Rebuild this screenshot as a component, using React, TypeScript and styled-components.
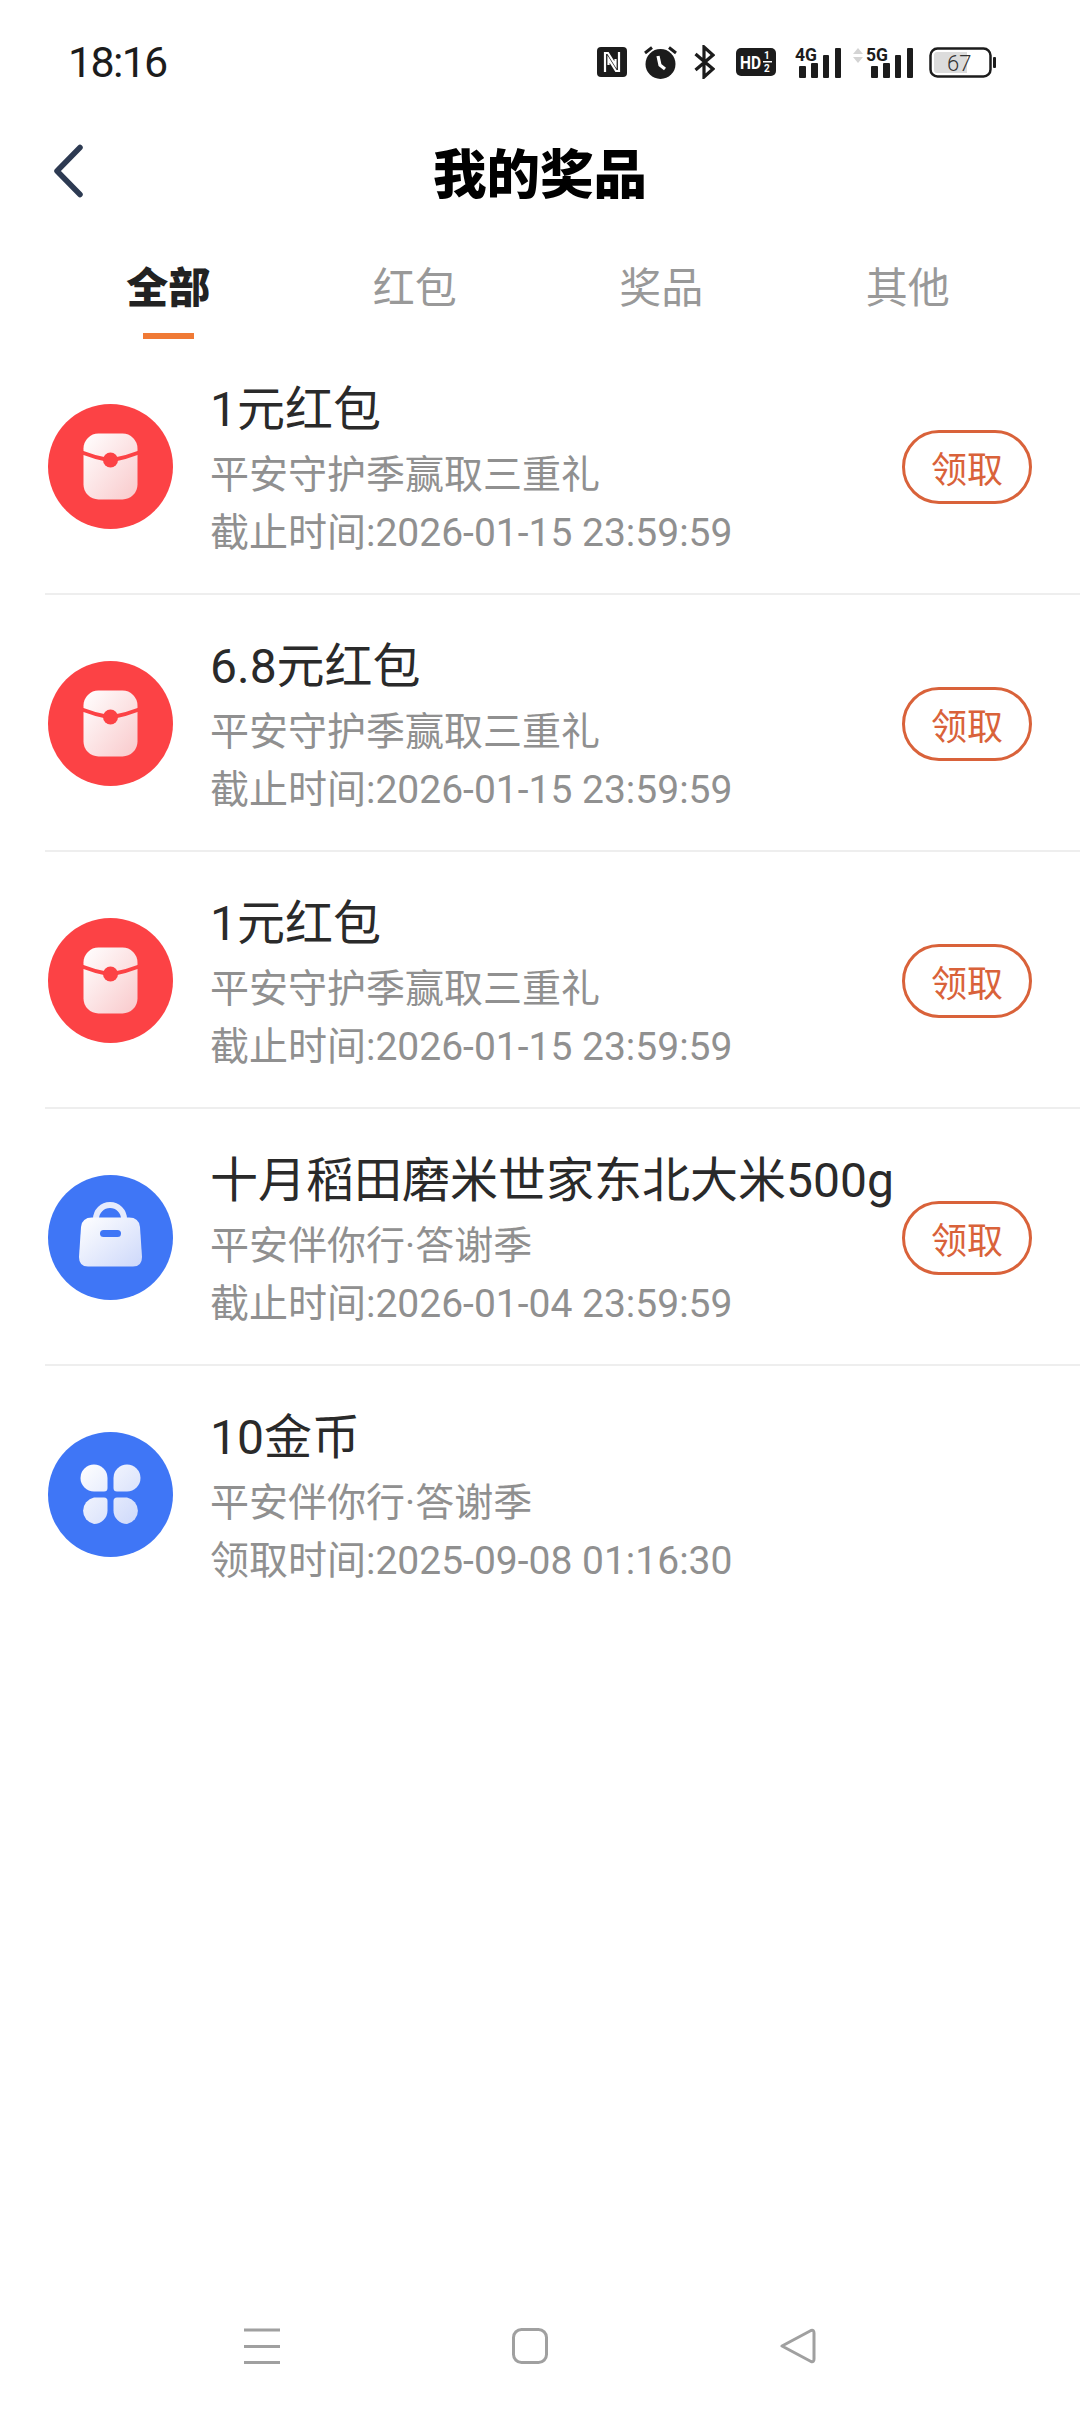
import styled, { createGlobalStyle } from "styled-components";

const GlobalStyle = createGlobalStyle`
  html, body {
    margin: 0;
    padding: 0;
    background: #fff;
    font-family: Roboto, "Noto Sans CJK SC", sans-serif;
  }
`;

const prizes = [
  { id: 1, name: "1元红包", from: "平安守护季赢取三重礼", time: "截止时间:2026-01-15 23:59:59", icon: "red", claim: true },
  { id: 2, name: "6.8元红包", from: "平安守护季赢取三重礼", time: "截止时间:2026-01-15 23:59:59", icon: "red", claim: true },
  { id: 3, name: "1元红包", from: "平安守护季赢取三重礼", time: "截止时间:2026-01-15 23:59:59", icon: "red", claim: true },
  { id: 4, name: "十月稻田磨米世家东北大米500g", from: "平安伴你行·答谢季", time: "截止时间:2026-01-04 23:59:59", icon: "bag", claim: true },
  { id: 5, name: "10金币", from: "平安伴你行·答谢季", time: "领取时间:2025-09-08 01:16:30", icon: "coin", claim: false },
];

const tabs = ["全部", "红包", "奖品", "其他"];

const RedPacketIcon = () => (
  <PrizeIcon viewBox="0 0 125 125">
    <defs>
      <linearGradient id="redFill" x1="0" y1="0" x2="1" y2="1">
        <stop offset="0" stopColor="#ffffff" />
        <stop offset="1" stopColor="#f9c9cb" />
      </linearGradient>
    </defs>
    <circle cx="62.5" cy="62.5" r="62.5" fill="#fc4245" />
    <rect x="35.5" y="29.5" width="54" height="66" rx="15" fill="url(#redFill)" />
    <path d="M34 48.500 Q48 54 62.500 56.500 Q77 54 91 48.500" fill="none" stroke="#fc4245" strokeWidth="4" />
    <circle cx="62.5" cy="56" r="7.500" fill="#fc4245" />
  </PrizeIcon>
);

const BagIcon = () => (
  <PrizeIcon viewBox="0 0 125 125">
    <defs>
      <linearGradient id="bagFill" x1="0" y1="0" x2="1" y2="1">
        <stop offset="0" stopColor="#ffffff" />
        <stop offset="1" stopColor="#cdd8fa" />
      </linearGradient>
    </defs>
    <circle cx="62.5" cy="62.5" r="62.5" fill="#3f76f6" />
    <path d="M48 47 V44 A14 14 0 0 1 76 44 V47" fill="none" stroke="#e6ebfc" strokeWidth="6" />
    <path d="M44 42.500 H81 Q91 42.500 92 52 L94 82 Q94 91.500 85 91.500 H40 Q31 91.500 31 82 L33 52 Q34 42.500 44 42.500 Z" fill="url(#bagFill)" />
    <rect x="52" y="55" width="21" height="7" rx="3.5" fill="#3f76f6" />
  </PrizeIcon>
);

const CoinIcon = () => (
  <PrizeIcon viewBox="0 0 125 125">
    <defs>
      <linearGradient id="coinFill" gradientUnits="userSpaceOnUse" x1="32" y1="32" x2="92" y2="92">
        <stop offset="0" stopColor="#ffffff" />
        <stop offset="1" stopColor="#cdd8fa" />
      </linearGradient>
    </defs>
    <circle cx="62.5" cy="62.5" r="62.5" fill="#3f76f6" />
    <path d="M46 32.500 A13.500 13.500 0 0 1 59.500 46 V56 Q59.500 59.500 56 59.500 H46 A13.500 13.500 0 0 1 46 32.500 Z" fill="url(#coinFill)" />
    <path d="M79 32.500 A13.500 13.500 0 0 1 79 59.500 H69 Q65.500 59.500 65.500 56 V46 A13.500 13.500 0 0 1 79 32.500 Z" fill="url(#coinFill)" />
    <path d="M46 92 A13.500 13.500 0 0 1 46 65.500 H56 Q59.500 65.500 59.500 69 V78.500 A13.500 13.500 0 0 1 46 92 Z" fill="url(#coinFill)" />
    <path d="M79 92 A13.500 13.500 0 0 1 65.500 78.500 V69 Q65.500 65.500 69 65.500 H79 A13.500 13.500 0 0 1 79 92 Z" fill="url(#coinFill)" />
  </PrizeIcon>
);

const icons: Record<string, () => React.ReactElement> = {
  red: RedPacketIcon,
  bag: BagIcon,
  coin: CoinIcon,
};

const StatusIcons = () => (
  <StIcons>
    {/* NFC */}
    <StatusSvg width="30" height="30" viewBox="0 0 30 30">
      <rect width="30" height="30" rx="4" fill="#1c1c1c" />
      <path d="M8 25 V6 H11 L18.500 18 V12 M22 5 V24 H19 L11.500 12 V18" fill="none" stroke="#fff" strokeWidth="2.200" />
    </StatusSvg>
    {/* alarm */}
    <StatusSvg $left={16} width="35" height="34" viewBox="0 0 35 34">
      <circle cx="17.500" cy="19" r="15" fill="#1c1c1c" />
      <path d="M2 8 L9 2.500 M33 8 L26 2.500" stroke="#1c1c1c" strokeWidth="3" />
      <path d="M15 11 L17 20 L22 24" fill="none" stroke="#fff" strokeWidth="3.200" />
    </StatusSvg>
    {/* bluetooth */}
    <StatusSvg $left={16} width="21" height="34" viewBox="0 0 21 34">
      <path d="M1.500 9 L19 24 L10 32 V2 L19 10 L1.500 25" fill="none" stroke="#1c1c1c" strokeWidth="3.200" />
    </StatusSvg>
    {/* HD */}
    <StatusSvg $left={21} width="40" height="28" viewBox="0 0 40 28">
      <rect width="40" height="28" rx="5" fill="#1c1c1c" />
      <StatusText x="4" y="21" fontSize="19" fill="#fff" textLength="21" lengthAdjust="spacingAndGlyphs">HD</StatusText>
      <StatusText x="28" y="11" fontSize="10" fill="#fff">1</StatusText>
      <rect x="27" y="13" width="9" height="1.500" fill="#fff" />
      <StatusText x="28" y="24" fontSize="10" fill="#fff">2</StatusText>
    </StatusSvg>
    {/* 4G */}
    <StatusSvg $left={19} $lift={6} width="46" height="37" viewBox="0 -6 46 37">
      <StatusText x="0" y="14" fontSize="19" fill="#1c1c1c" textLength="22" lengthAdjust="spacingAndGlyphs">4G</StatusText>
      <rect x="4" y="19" width="7" height="12" rx="1" fill="#1c1c1c" />
      <rect x="16" y="16" width="7" height="15" rx="1" fill="#1c1c1c" />
      <rect x="28" y="8" width="6" height="23" rx="1" fill="#1c1c1c" />
      <rect x="40" y="1" width="6" height="30" rx="1" fill="#1c1c1c" />
    </StatusSvg>
    {/* 5G */}
    <StatusSvg $left={12} $lift={6} width="60" height="37" viewBox="0 -6 60 37">
      <path d="M0 7 L5 1 L10 7 Z M0 10 L5 16 L10 10 Z" fill="#d4d4d4" />
      <StatusText x="13" y="14" fontSize="19" fill="#1c1c1c" textLength="22" lengthAdjust="spacingAndGlyphs">5G</StatusText>
      <rect x="18" y="19" width="7" height="12" rx="1" fill="#1c1c1c" />
      <rect x="30" y="16" width="7" height="15" rx="1" fill="#1c1c1c" />
      <rect x="42" y="8" width="6" height="23" rx="1" fill="#1c1c1c" />
      <rect x="54" y="1" width="6" height="30" rx="1" fill="#1c1c1c" />
    </StatusSvg>
    {/* battery */}
    <StatusSvg $left={16} width="67" height="31" viewBox="0 0 67 31">
      <rect x="1.500" y="1.500" width="60" height="28" rx="7" fill="none" stroke="#1c1c1c" strokeWidth="2.500" />
      <path d="M8 5 H38 V26 H8 Q5 26 5 23 V8 Q5 5 8 5 Z" fill="#dcdcdc" />
      <BatteryText x="18" y="24" fontSize="22" fill="#333">67</BatteryText>
      <rect x="64" y="10" width="3" height="11" rx="1" fill="#1c1c1c" />
    </StatusSvg>
  </StIcons>
);

const App = () => {
  return (
    <StPage>
      <GlobalStyle />
      <StStatusBar>
        <StTime>18:16</StTime>
        <StatusIcons />
      </StStatusBar>
      <StHeader>
        <StBack width="40" height="60" viewBox="0 0 40 60">
          <path d="M34 6.500 L11 30 L34 53.500" fill="none" stroke="#2d3a52" strokeWidth="5.500" strokeLinecap="round" strokeLinejoin="round" />
        </StBack>
        <StTitle>我的奖品</StTitle>
      </StHeader>
      <StTabs>
        {tabs.map((tab, i) => (
          <StTab key={tab} $active={i === 0}>
            {tab}
            <StTabLine $active={i === 0} />
          </StTab>
        ))}
      </StTabs>
      <StList>
        {prizes.map((prize) => {
          const Icon = icons[prize.icon];
          return (
            <StRow key={prize.id}>
              <Icon />
              <StInfo>
                <StName>{prize.name}</StName>
                <StSub>{prize.from}</StSub>
                <StSub>{prize.time}</StSub>
              </StInfo>
              {prize.claim && <StClaim>领取</StClaim>}
            </StRow>
          );
        })}
      </StList>
      <StNav>
        <StNavIcon width="36" height="36" viewBox="0 0 36 36">
          <path d="M0 2 H36 M0 18.500 H36 M0 34.500 H36" stroke="#a0a0a0" strokeWidth="3" />
        </StNavIcon>
        <StNavIcon width="36" height="36" viewBox="0 0 36 36">
          <rect x="1.500" y="1.500" width="33" height="33" rx="8" fill="none" stroke="#a0a0a0" strokeWidth="3" />
        </StNavIcon>
        <StNavIcon width="36" height="36" viewBox="0 0 36 36">
          <path d="M2 18 L31 2.500 Q34 1.500 34 5 V31 Q34 34.500 31 33.500 Z" fill="none" stroke="#a0a0a0" strokeWidth="3" strokeLinejoin="round" />
        </StNavIcon>
      </StNav>
    </StPage>
  );
};

export default App;

const StPage = styled.div`
  display: flex;
  flex-direction: column;
  width: 1080px;
  height: 2412px;
  overflow: hidden;
  background: #fff;
`;

const StStatusBar = styled.div`
  display: flex;
  align-items: center;
  justify-content: space-between;
  height: 124px;
  padding: 0 84px 0 68px;
  box-sizing: border-box;
`;

const StTime = styled.div`
  font-size: 43px;
  color: #1c1c1c;
  letter-spacing: -1.700px;
`;

const StIcons = styled.div`
  display: flex;
  align-items: center;
`;

const StatusSvg = styled.svg<{ $left?: number; $lift?: number }>`
  display: block;
  flex: none;
  margin-left: ${(props) => props.$left || 0}px;
  margin-top: ${(props) => -(props.$lift || 0)}px;
`;

const StatusText = styled.text`
  font-family: Roboto, sans-serif;
  font-weight: 700;
`;

const BatteryText = styled.text`
  font-family: Roboto, sans-serif;
  font-weight: 300;
`;

const StHeader = styled.div`
  position: relative;
  display: flex;
  align-items: center;
  justify-content: center;
  height: 100px;
`;

const StBack = styled.svg`
  position: absolute;
  left: 46px;
  top: 17px;
`;

const StTitle = styled.div`
  font-size: 53.500px;
  font-weight: 900;
  color: #000;
  margin-bottom: 8px;
`;

const StTabs = styled.div`
  display: grid;
  grid-template-columns: repeat(4, 246.500px);
  padding: 39px 0 0 45px;
  margin-bottom: -1px;
`;

const StTab = styled.div<{ $active?: boolean }>`
  display: flex;
  flex-direction: column;
  align-items: center;
  gap: 18px;
  font-size: 42px;
  line-height: 52px;
  font-weight: ${(props) => (props.$active ? 900 : 400)};
  color: ${(props) => (props.$active ? "#222" : "#999")};
`;

const StTabLine = styled.div<{ $active?: boolean }>`
  width: 51px;
  height: 6px;
  background: ${(props) => (props.$active ? "#f07a35" : "transparent")};
`;

const StList = styled.div`
  display: flex;
  flex-direction: column;
  padding-left: 45px;
`;

const StRow = styled.div`
  display: flex;
  align-items: center;
  height: 257px;
  box-sizing: border-box;
  padding: 0 48px 0 3px;
  box-shadow: inset 0 -2px 0 #eeeeee;

  &:last-child {
    box-shadow: none;
  }
`;

const PrizeIcon = styled.svg`
  display: block;
  flex: none;
  width: 125px;
  height: 125px;
`;

const StInfo = styled.div`
  flex: 1;
  display: flex;
  flex-direction: column;
  align-self: flex-start;
  margin: 35px 0 0 37px;
  white-space: nowrap;
`;

const StName = styled.div`
  font-size: 48px;
  line-height: 73px;
  color: #2a2a2a;
`;

const StSub = styled.div`
  font-size: 39px;
  line-height: 58px;
  font-weight: 400;
  color: #909090;
`;

const StClaim = styled.div`
  display: flex;
  align-items: center;
  justify-content: center;
  flex: none;
  width: 130px;
  height: 74px;
  box-sizing: border-box;
  border: 3.500px solid #d9623a;
  border-radius: 37px;
  font-size: 36px;
  font-weight: 400;
  color: #d9623a;
`;

const StNav = styled.div`
  display: flex;
  align-items: center;
  gap: 232px;
  margin-top: auto;
  padding: 0 0 48px 244px;
`;

const StNavIcon = styled.svg`
  display: block;
  flex: none;
`;
